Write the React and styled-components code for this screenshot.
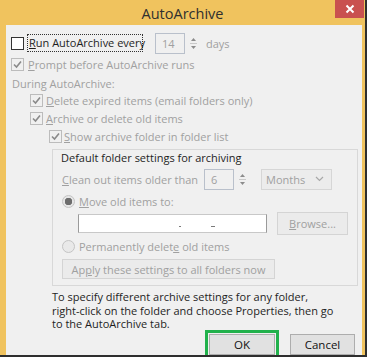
import styled, { createGlobalStyle } from "styled-components";

const GlobalStyle = createGlobalStyle`
  body { margin: 0; background: #fff; }
  * { box-sizing: border-box; }
`;

const GRAY = "#a0a0a0";
const INK = "#1e1e1e";
const FONT = "11px";

const Check = ({ checked, disabled }) => (
  <CheckBox $disabled={disabled}>
    {checked && (
      <svg width="11" height="11" viewBox="0 0 11 11">
        <polyline points="2,5.5 4.5,8 9,2.5" fill="none" stroke={disabled ? "#8a8a8a" : "#333"} strokeWidth="1.6" />
      </svg>
    )}
  </CheckBox>
);

const Spinner = () => (
  <SpinArrows>
    <svg width="11" height="21" viewBox="0 0 11 21">
      <polygon points="3,8 8,8 5.5,5" fill="#8c8c8c" />
      <line x1="2" y1="10.5" x2="9" y2="10.5" stroke="#c9c9c9" />
      <polygon points="3,13 8,13 5.5,16" fill="#8c8c8c" />
    </svg>
  </SpinArrows>
);

const App = () => {
  return (
    <>
      <GlobalStyle />
      <Window>
        <TitleBar>
          <Title>AutoArchive</Title>
          <CloseButton>
            <svg width="10" height="10" viewBox="0 0 10 10">
              <path d="M1.5 1.5 L8.5 8.5 M8.5 1.5 L1.5 8.5" stroke="#fff" strokeWidth="2" />
            </svg>
          </CloseButton>
        </TitleBar>

        <Client>
          <Row $h={22}>
            <Check />
            <FocusLabel><u>R</u>un AutoArchive every</FocusLabel>
            <SpinBox $w={30} $ml={12}>14</SpinBox>
            <Spinner />
            <Label $ml={7} $gray>days</Label>
          </Row>
          <Row $h={20}>
            <Check checked disabled />
            <Label $ml={4} $gray><u>P</u>rompt before AutoArchive runs</Label>
          </Row>
          <Row $h={18} $indent={1}>
            <Label $gray>During AutoArchive:</Label>
          </Row>
          <Row $h={17} $indent={19}>
            <Check checked disabled />
            <Label $ml={3} $gray><u>D</u>elete expired items (email folders only)</Label>
          </Row>
          <Row $h={18} $indent={19}>
            <Check checked disabled />
            <Label $ml={3} $gray><u>A</u>rchive or delete old items</Label>
          </Row>
          <Row $h={18} $indent={38}>
            <Check checked disabled />
            <Label $ml={2} $gray><u>S</u>how archive folder in folder list</Label>
          </Row>

          <GroupBox>
            <Row $h={13}>
              <Label>Default folder settings for archiving</Label>
            </Row>
            <Row $h={24} $indent={1} $mt={3}>
              <Label $w={142} $gray><u>C</u>lean out items older than</Label>
              <SpinBox $w={30}>6</SpinBox>
              <Spinner />
              <Combo>
                Months
                <svg width="9" height="6" viewBox="0 0 9 6">
                  <polyline points="1,1 4.5,4.5 8,1" fill="none" stroke="#a8a8a8" strokeWidth="1.2" />
                </svg>
              </Combo>
            </Row>
            <Row $h={20} $indent={1}>
              <Radio $selected />
              <Label $ml={4} $gray><u>M</u>ove old items to:</Label>
            </Row>
            <Row $h={24} $indent={17}>
              <PathBox>
                <Speck style={{ marginLeft: 100 }} />
                <Speck style={{ marginLeft: 30, width: 4 }} />
              </PathBox>
              <DialogButton $w={71} $h={23} $ml={10} $disabled><u>B</u>rowse...</DialogButton>
            </Row>
            <Row $h={22} $indent={1}>
              <Radio />
              <Label $ml={4} $gray>Permanently delet<u>e</u> old items</Label>
            </Row>
            <Row $h={20} $indent={1} $mt={2}>
              <DialogButton $w={213} $h={20} $disabled>Ap<u>p</u>ly these settings to all folders now</DialogButton>
            </Row>
          </GroupBox>

          <Note>
            To specify different archive settings for any folder,<br />
            right-click on the folder and choose Properties, then go<br />
            to the AutoArchive tab.
          </Note>

          <ButtonBar>
            <DialogButton $w={66} $h={21} $highlight>OK</DialogButton>
            <DialogButton $w={65} $h={21}>Cancel</DialogButton>
          </ButtonBar>
        </Client>
      </Window>
    </>
  );
};

// window frame
const Window = styled.div`
  width: 367px;
  height: 357px;
  display: flex;
  flex-direction: column;
  background: #f0c35e;
  border-right: 2px solid #2e2e2e;
  border-bottom: 2px solid #2e2e2e;
  font-family: "Open Sans", "Noto Sans", sans-serif;
  overflow: hidden;
`;

const TitleBar = styled.div`
  height: 25px;
  flex-shrink: 0;
  display: grid;
  grid-template-columns: 1fr auto 1fr;
  align-items: center;
`;

const Title = styled.div`
  grid-column: 2;
  font-size: 14.5px;
  color: #2f2f2f;
  padding-top: 1px;
`;

const CloseButton = styled.div`
  grid-column: 3;
  justify-self: end;
  align-self: start;
  width: 29px;
  height: 18px;
  margin-right: 1px;
  background: #c9514f;
  display: flex;
  align-items: center;
  justify-content: center;
`;

// client area
const Client = styled.div`
  flex: 1;
  margin: 0 3px 0 6px;
  background: #f0f0f0;
  padding: 7px 0 0 5px;
  display: flex;
  flex-direction: column;
`;

const Row = styled.div`
  display: flex;
  align-items: center;
  flex-shrink: 0;
  height: ${(p) => p.$h}px;
  padding-left: ${(p) => p.$indent || 0}px;
  margin-top: ${(p) => p.$mt || 0}px;
`;

const Label = styled.span`
  font-size: ${FONT};
  white-space: nowrap;
  color: ${(p) => (p.$gray ? GRAY : INK)};
  margin-left: ${(p) => p.$ml || 0}px;
  ${(p) => p.$w && `width: ${p.$w}px;`}
`;

const FocusLabel = styled.span`
  font-size: ${FONT};
  color: ${INK};
  white-space: nowrap;
  width: 116px;
  height: 18px;
  margin-left: 3px;
  padding: 0 1px;
  line-height: 16px;
  border: 1px dotted #333;
`;

const CheckBox = styled.span`
  width: 13px;
  height: 13px;
  flex-shrink: 0;
  display: flex;
  align-items: center;
  justify-content: center;
  border: 1px solid ${(p) => (p.$disabled ? "#bcbcbc" : "#333")};
  background: ${(p) => (p.$disabled ? "#f0f0f0" : "#fff")};
`;

const Radio = styled.span`
  width: 13px;
  height: 13px;
  flex-shrink: 0;
  border-radius: 50%;
  border: 1px solid #c4c4c4;
  background: ${(p) =>
    p.$selected ? "radial-gradient(circle, #6d6d6d 0 3.5px, #e6e6e6 4px)" : "#e9e9e9"};
`;

const SpinBox = styled.span`
  width: ${(p) => p.$w}px;
  height: 21px;
  margin-left: ${(p) => p.$ml || 0}px;
  border: 1px solid #b9c0cb;
  background: #f0f0f0;
  color: ${GRAY};
  font-size: ${FONT};
  padding-left: 6px;
  display: flex;
  align-items: center;
`;

const SpinArrows = styled.span`
  width: 11px;
  height: 21px;
  margin-left: 3px;
  display: flex;
`;

const Combo = styled.span`
  width: 71px;
  height: 21px;
  margin-left: 13px;
  border: 1px solid #d6d6d6;
  background: #ececec;
  color: ${GRAY};
  font-size: ${FONT};
  padding: 0 7px 0 4px;
  display: flex;
  align-items: center;
  justify-content: space-between;
`;

const PathBox = styled.span`
  width: 194px;
  height: 19px;
  background: #fff;
  border: 1px solid #c8c8c8;
  border-left-color: #9a9a9a;
  border-right-color: #9a9a9a;
  display: flex;
  align-items: flex-end;
  padding-bottom: 5px;
`;

const Speck = styled.span`
  width: 2px;
  height: 1px;
  background: #7a7a7a;
`;

const GroupBox = styled.div`
  margin: 4px 4px 0 41px;
  border: 1px solid #d8d8d8;
  padding: 1px 9px 6px 8px;
  display: flex;
  flex-direction: column;
`;

const DialogButton = styled.span`
  width: ${(p) => p.$w}px;
  height: ${(p) => p.$h}px;
  margin-left: ${(p) => p.$ml || 0}px;
  flex-shrink: 0;
  display: flex;
  align-items: center;
  justify-content: center;
  font-size: ${(p) => (p.$disabled ? FONT : "11.5px")};
  white-space: nowrap;
  color: ${(p) => (p.$disabled ? GRAY : "#111")};
  background: ${(p) => (p.$disabled ? "#ebebeb" : "#e1e1e1")};
  border: 1px solid ${(p) => (p.$disabled ? "#d4d4d4" : "#adadad")};
  ${(p) => p.$highlight && "outline: 3px solid #21b14b; outline-offset: 1px;"}
`;

const Note = styled.p`
  margin: 4px 0 0 41px;
  font-size: ${FONT};
  line-height: 13.5px;
  color: ${INK};
  white-space: nowrap;
`;

const ButtonBar = styled.div`
  display: flex;
  gap: 15px;
  margin-top: 3px;
  padding-left: 198px;
`;

export default App;
